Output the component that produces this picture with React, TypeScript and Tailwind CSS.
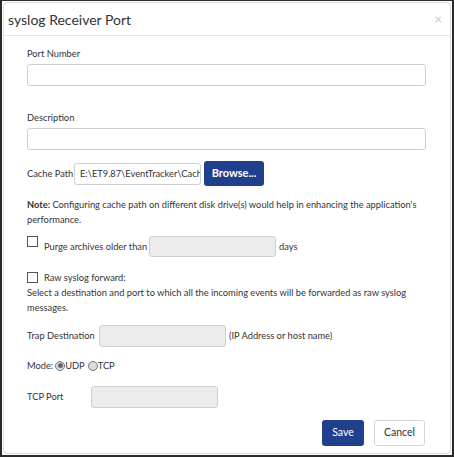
const font = { fontFamily: 'Lato, "Open Sans", sans-serif' }

function Box({ className = '' }: { className?: string }) {
  return <div className={`h-[22px] rounded-[3px] border border-[#cfcfcf] ${className}`} />
}

function Check() {
  return <span className="inline-block h-[11px] w-[11px] shrink-0 border border-[#555] bg-white" />
}

function Radio({ on }: { on?: boolean }) {
  return (
    <span className="inline-flex h-[10px] w-[10px] items-center justify-center rounded-full border border-[#777] bg-[#ddd]">
      {on && <span className="h-[5px] w-[5px] rounded-full bg-[#666]" />}
    </span>
  )
}

export default function App() {
  return (
    <div className="h-[457px] w-[454px] overflow-hidden border-x-2 border-b-2 border-t border-[#2a2a2a] bg-white p-px" style={font}>
      <div className="h-full rounded-[4px] border border-[#dedede] bg-white text-[9.3px] text-[#333]">
        <div className="flex h-[33px] items-center justify-between border-b border-[#e8e8e8] pl-[4px] pr-[8px]">
          <h1 className="text-[14px] text-[#333]">syslog Receiver Port</h1>
          <span className="text-[13px] leading-none text-[#c8c8c8]">×</span>
        </div>

        <div className="whitespace-nowrap pl-[23px] pr-[23px]">
          <div className="mt-[11px] leading-[14px]">Port Number</div>
          <Box className="mt-[3px] w-[399px]" />

          <div className="mt-[25px] leading-[14px]">Description</div>
          <Box className="mt-[3px] w-[399px]" />

          <div className="mt-[11px] flex items-center">
            <span className="w-[47px]">Cache Path</span>
            <div className="flex h-[22px] w-[127px] items-center overflow-hidden rounded-[3px] border border-[#cfcfcf] pl-[5px]">
              E:\ET9.87\EventTracker\Cache
            </div>
            <button className="ml-[3px] h-[25px] w-[60px] rounded-[3px] bg-[#203f8c] text-[11px] font-bold text-white">
              Browse...
            </button>
          </div>

          <p className="mt-[11px] whitespace-normal leading-[15px]">
            <b>Note:</b> Configuring cache path on different disk drive(s) would help in enhancing the application's
            performance.
          </p>

          <div className="mt-[9px] flex items-start">
            <Check />
            <span className="ml-[6px] mt-[4px] w-[105px]">Purge archives older than</span>
            <div className="h-[21px] w-[127px] rounded-[3px] border border-[#cfcfcf] bg-[#ececec]" />
            <span className="ml-[3px] mt-[4px]">days</span>
          </div>

          <div className="mt-[14px] flex items-center">
            <Check />
            <span className="ml-[6px]">Raw syslog forward:</span>
          </div>

          <p className="mt-0 whitespace-normal leading-[15px]">
            Select a destination and port to which all the incoming events will be forwarded as raw syslog messages.
          </p>

          <div className="mt-[10px] flex items-center">
            <span className="w-[72px]">Trap Destination</span>
            <div className="h-[22px] w-[127px] rounded-[3px] border border-[#cfcfcf] bg-[#ececec]" />
            <span className="ml-[3px]">(IP Address or host name)</span>
          </div>

          <div className="mt-[12px] flex items-center">
            <span className="mr-[2px]">Mode:</span>
            <Radio on />
            <span>UDP</span>
            <span className="ml-[3px]" />
            <Radio />
            <span>TCP</span>
          </div>

          <div className="mt-[13px] flex items-center">
            <span className="w-[64px]">TCP Port</span>
            <div className="h-[22px] w-[127px] rounded-[3px] border border-[#cfcfcf] bg-[#ececec]" />
          </div>

          <div className="mt-[12px] flex justify-end gap-[10px] pr-[2px]">
            <button className="h-[26px] w-[42px] rounded-[3px] bg-[#203f8c] text-[10.5px] text-white">Save</button>
            <button className="h-[26px] w-[51px] rounded-[3px] border border-[#d5d5d5] bg-white text-[10.5px] text-[#333]">
              Cancel
            </button>
          </div>
        </div>
      </div>
    </div>
  )
}
